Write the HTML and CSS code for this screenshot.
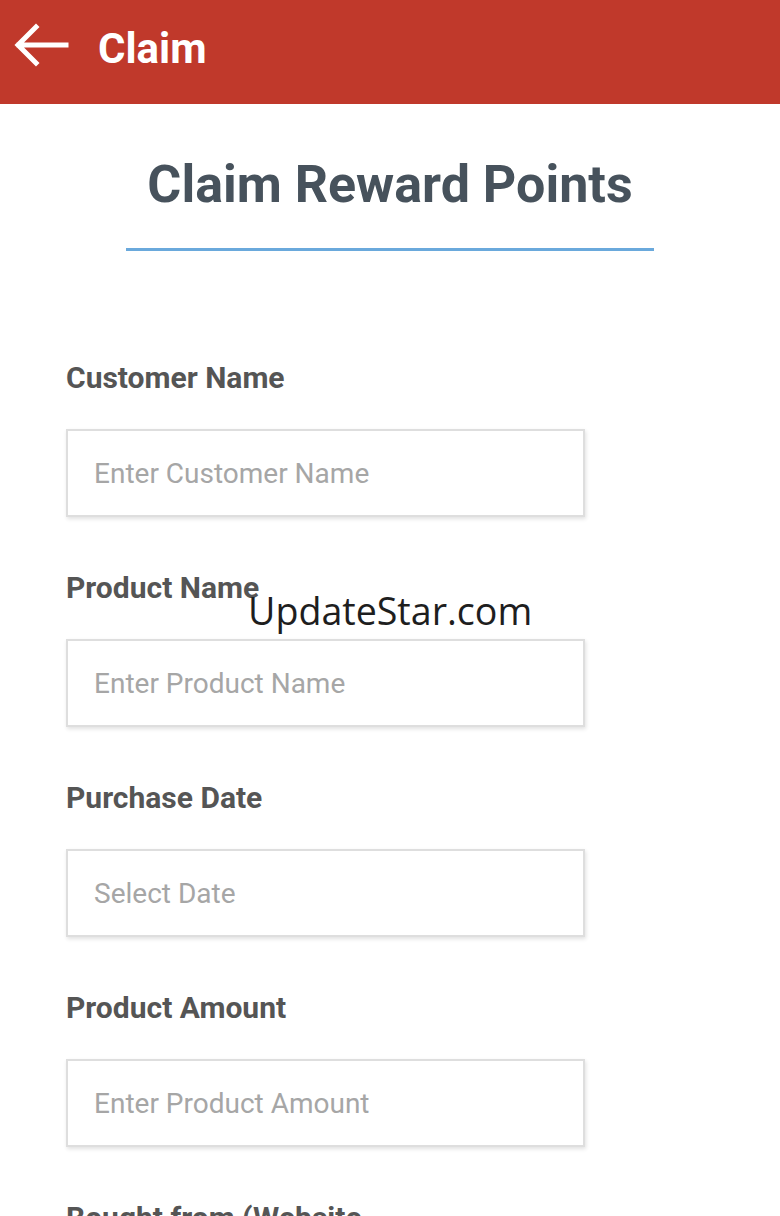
FILE: index.html
```html
<!DOCTYPE html>
<html>
<head>
<meta charset="utf-8">
<link rel="stylesheet" href="styles.css">
</head>
<body>
<header class="appbar">
  <svg class="back" viewBox="0 0 56 44" width="56" height="44">
    <path d="M53 22H6M23 4L5 22L23 40" fill="none" stroke="#fff" stroke-width="5" stroke-linecap="square"/>
  </svg>
  <span class="appbar-title">Claim</span>
</header>
<main class="content">
  <h1 class="page-title">Claim Reward Points</h1>
  <div class="title-rule"></div>
  <form class="form">
    <div class="field">
      <label class="label">Customer Name</label>
      <div class="input"><span class="placeholder">Enter Customer Name</span></div>
    </div>
    <div class="field">
      <label class="label">Product Name</label>
      <div class="input"><span class="placeholder">Enter Product Name</span></div>
    </div>
    <div class="field">
      <label class="label">Purchase Date</label>
      <div class="input"><span class="placeholder">Select Date</span></div>
    </div>
    <div class="field">
      <label class="label">Product Amount</label>
      <div class="input"><span class="placeholder">Enter Product Amount</span></div>
    </div>
    <div class="field">
      <label class="label">Bought from (Website</label>
    </div>
  </form>
</main>
<div class="watermark">UpdateStar.com</div>
</body>
</html>
```
FILE: styles.css
```css
html, body {
  margin: 0;
  padding: 0;
  background: #fff;
  height: 1216px;
  overflow: hidden;
}
body {
  font-family: Roboto, "Liberation Sans", sans-serif;
  position: relative;
}
.appbar {
  height: 104px;
  background: #c0392b;
  display: flex;
  align-items: center;
  box-sizing: border-box;
  padding-left: 13px;
}
.back {
  display: block;
  margin-top: -14px;
}
.appbar-title {
  color: #fff;
  font-weight: 700;
  font-size: 42px;
  line-height: 50px;
  margin-left: 29px;
  margin-top: -6px;
}
.content {
  display: flex;
  flex-direction: column;
  align-items: center;
  padding-top: 51px;
}
.page-title {
  margin: 0;
  font-size: 52px;
  line-height: 60px;
  font-weight: 700;
  color: #47525c;
}
.title-rule {
  width: 528px;
  height: 3px;
  background: #6aa9dc;
  margin-top: 33px;
}
.form {
  align-self: stretch;
  padding-left: 66px;
  margin-top: 109px;
  display: flex;
  flex-direction: column;
  gap: 53px;
}
.field {
  display: flex;
  flex-direction: column;
}
.label {
  font-size: 30px;
  font-weight: 700;
  color: #555;
  line-height: 36px;
  margin-bottom: 33px;
}
.input {
  width: 519px;
  height: 88px;
  box-sizing: border-box;
  border: 2px solid #dedede;
  box-shadow: 1px 2px 4px rgba(0,0,0,0.12);
  display: flex;
  align-items: center;
  padding-left: 26px;
  background: #fff;
}
.placeholder {
  font-size: 28px;
  color: #a6a6a6;
}
.watermark {
  position: absolute;
  left: 248px;
  top: 585px;
  font-family: "Open Sans", sans-serif;
  font-size: 37.6px;
  color: #1e1e1e;
  line-height: 52px;
}
```
